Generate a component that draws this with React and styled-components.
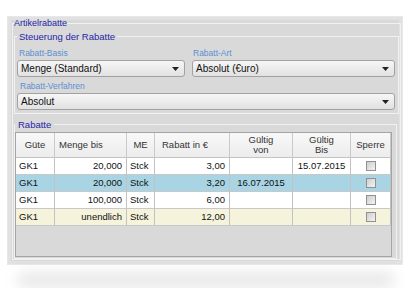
import React from 'react';
import styled, { createGlobalStyle } from 'styled-components';

const Global = createGlobalStyle`
  html, body { margin: 0; padding: 0; background: #fff; }
  body { font-family: "Liberation Sans", Arial, sans-serif; }
`;

const Page = styled.div`
  padding: 16px 0 0 7px;
  width: 396px;
`;

const Panel = styled.div`
  box-sizing: border-box;
  width: 396px;
  border: 1px solid #e8e8e8;
  background: #d9d9d9;
  padding: 1px 1px 4px 4px;
  box-shadow: inset 0 0 0 3px #e1e1e1;
`;

const Group = styled.fieldset`
  margin: ${p => p.$margin || '0'};
  padding: ${p => p.$padding || '0'};
  border: 1px solid #f1f1f1;
  min-width: 0;
`;

const Legend = styled.legend`
  padding: 0 ${p => p.$pad || 0}px;
  font-size: ${p => p.$size || 9.5}px;
  line-height: ${p => p.$lh || 11}px;
  color: #2626a8;
`;

const FieldGrid = styled.div`
  display: grid;
  grid-template-columns: 168px 1fr;
  column-gap: 7px;
  row-gap: 4px;
`;

const Field = styled.div`
  display: flex;
  flex-direction: column;
  grid-column: ${p => (p.$wide ? '1 / -1' : 'auto')};
`;

const Label = styled.div`
  font-size: 8.5px;
  line-height: 10px;
  color: #5b8fd4;
  padding-left: ${p => p.$indent || 2}px;
  margin-bottom: 2px;
`;

const Select = styled.div`
  box-sizing: border-box;
  height: 17px;
  border: 1px solid #a2a2a2;
  border-radius: 3px;
  background: linear-gradient(#f7f7f7, #e1e1e1);
  display: flex;
  align-items: center;
  justify-content: space-between;
  padding: 0 5px 0 3px;
  font-size: 10px;
  color: #111;
`;

const Arrow = () => (
  <svg width="7" height="4" viewBox="0 0 7 4">
    <polygon points="0,0 7,0 3.5,4" fill="#222" />
  </svg>
);

const GridBox = styled.div`
  box-sizing: border-box;
  height: 125px;
  border: 1px solid #a4a4a4;
  background: #d9d9d9;
`;

const Table = styled.table`
  border-collapse: separate;
  border-spacing: 0;
  table-layout: fixed;
  width: 375px;
  font-size: 9.5px;
`;

const Th = styled.th`
  box-sizing: border-box;
  height: 25px;
  padding: 0 ${p => p.$pr || 0}px 0 ${p => p.$pl || 0}px;
  background: linear-gradient(#f8f8f8, #ececec);
  border-right: 1px solid #cacaca;
  border-bottom: 1px solid #c4c4c4;
  font-weight: normal;
  color: #333;
  text-align: ${p => p.$align || 'center'};
  line-height: 10px;
`;

const Tr = styled.tr`
  background: ${p => p.$bg};
`;

const Td = styled.td`
  box-sizing: border-box;
  height: 17px;
  padding: 0 ${p => p.$pr || 0}px 0 ${p => p.$pl || 0}px;
  border-right: 1px solid #c2c2c2;
  border-bottom: 1px solid #c8c8c8;
  color: #111;
  text-align: ${p => p.$align || 'left'};
  white-space: nowrap;
  line-height: 16px;
`;

const Check = styled.span`
  display: inline-block;
  box-sizing: border-box;
  width: 10px;
  height: 10px;
  border: 1px solid #919191;
  background: linear-gradient(135deg, #cdcdcd, #f4f4f4);
  vertical-align: middle;
`;

const Shadow = styled.div`
  margin: 7px 0 0 10px;
  width: 378px;
  height: 16px;
  border-radius: 10px;
  background: rgba(0, 0, 0, 0.09);
  filter: blur(7px);
`;

const cols = [39, 72, 28, 75, 63, 58, 40];

const rows = [
  { m: '20,000', r: '3,00', von: '', bis: '15.07.2015', bg: '#ffffff' },
  { m: '20,000', r: '3,20', von: '16.07.2015', bis: '', bg: '#a9d4e3' },
  { m: '100,000', r: '6,00', von: '', bis: '', bg: '#ffffff' },
  { m: 'unendlich', r: '12,00', von: '', bis: '', bg: '#f5f3db' },
];

export default function App() {
  return (
    <Page>
      <Global />
      <Panel>
        <Group $padding="0 1px 0 1px">
          <Legend $size={9} $lh={10}>Artikelrabatte</Legend>
          <Group $margin="3px 0 0 0" $padding="6px 3px 3px 2px">
            <Legend $pad={2}>Steuerung der Rabatte</Legend>
            <FieldGrid>
              <Field>
                <Label>Rabatt-Basis</Label>
                <Select>Menge (Standard)<Arrow /></Select>
              </Field>
              <Field>
                <Label $indent={1}>Rabatt-Art</Label>
                <Select>Absolut (€uro)<Arrow /></Select>
              </Field>
              <Field $wide>
                <Label $indent={3}>Rabatt-Verfahren</Label>
                <Select>Absolut<Arrow /></Select>
              </Field>
            </FieldGrid>
          </Group>
          <Group $margin="5px 2px 0 0" $padding="2px 4px 1px 0">
            <Legend $pad={3}>Rabatte</Legend>
            <GridBox>
              <Table>
                <colgroup>
                  {cols.map((w, i) => <col key={i} style={{ width: w }} />)}
                </colgroup>
                <thead>
                  <tr>
                    <Th>Güte</Th>
                    <Th $align="left" $pl={4}>Menge bis</Th>
                    <Th>ME</Th>
                    <Th $align="left" $pl={7}>Rabatt in €</Th>
                    <Th>Gültig<br />von</Th>
                    <Th>Gültig<br />Bis</Th>
                    <Th>Sperre</Th>
                  </tr>
                </thead>
                <tbody>
                  {rows.map((r, i) => (
                    <Tr key={i} $bg={r.bg}>
                      <Td $pl={3}>GK1</Td>
                      <Td $align="right" $pr={4}>{r.m}</Td>
                      <Td $pl={3}>Stck</Td>
                      <Td $align="right" $pr={4}>{r.r}</Td>
                      <Td $align="center">{r.von}</Td>
                      <Td $align="center">{r.bis}</Td>
                      <Td $align="center"><Check /></Td>
                    </Tr>
                  ))}
                </tbody>
              </Table>
            </GridBox>
          </Group>
        </Group>
      </Panel>
      <Shadow />
    </Page>
  );
}
